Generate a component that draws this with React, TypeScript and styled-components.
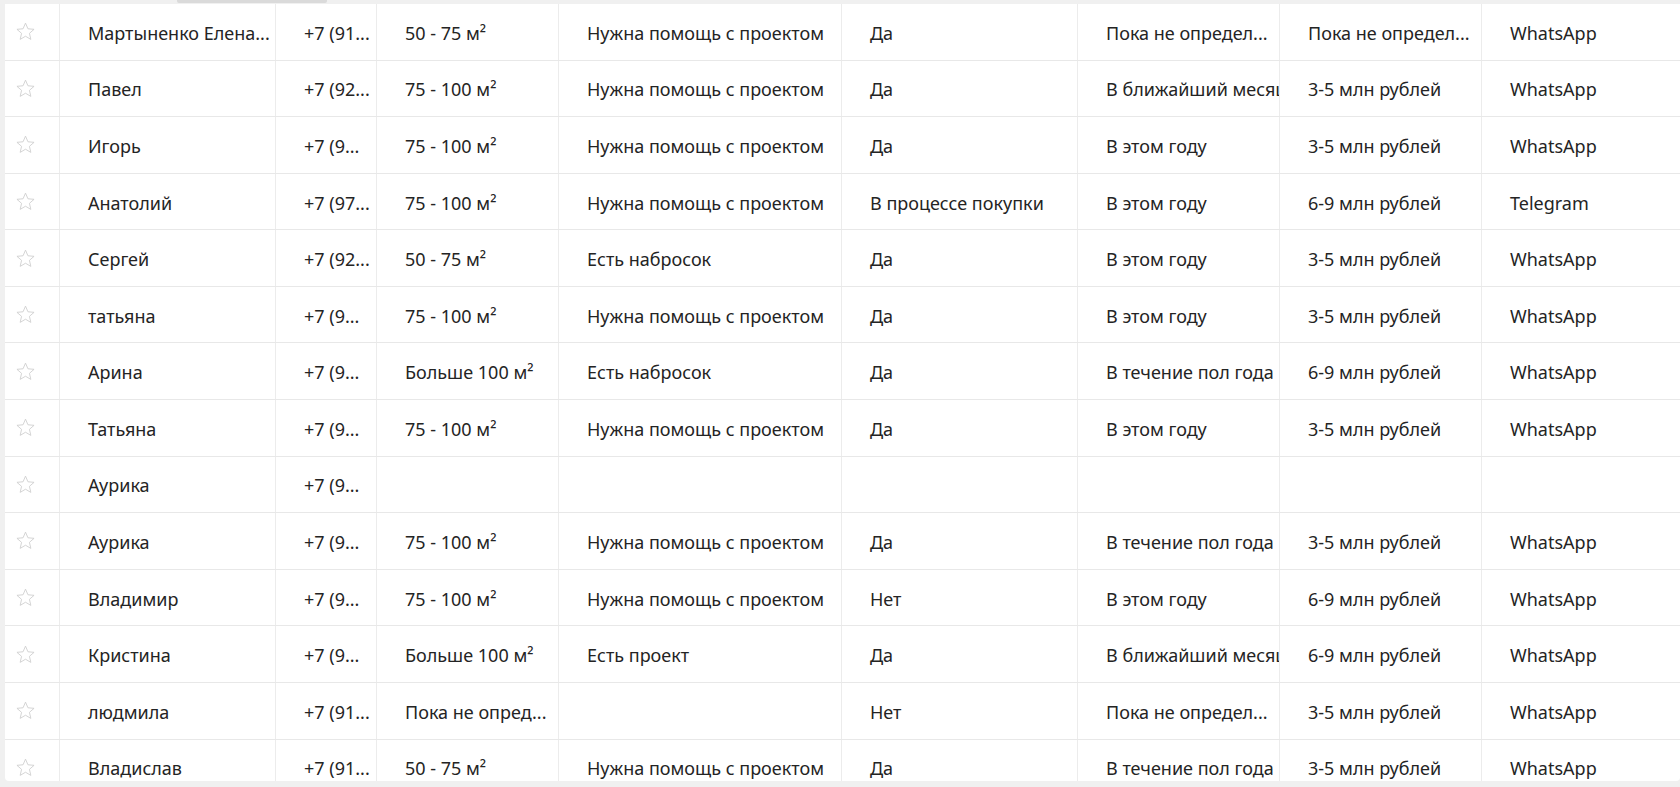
import styled, { createGlobalStyle } from 'styled-components';

const GlobalStyle = createGlobalStyle`
  html, body {
    margin: 0;
    padding: 0;
    background: rgb(240, 240, 240);
    font-family: "Noto Sans", "Open Sans", sans-serif;
    overflow: hidden;
  }
`;

const Page = styled.div`
  width: 1680px;
  height: 787px;
  display: flex;
  flex-direction: column;
`;

const ScrollTrack = styled.div`
  height: 4px;
  flex-shrink: 0;
  display: flex;
`;

const ScrollThumb = styled.div`
  margin-left: 177px;
  width: 150px;
  height: 3px;
  background: rgb(218, 218, 218);
  border-radius: 0 0 2px 2px;
`;

const TableBox = styled.div`
  margin-left: 5px;
  height: 777px;
  background: #fff;
  border-radius: 0 0 4px 4px;
  overflow: hidden;
`;

const Row = styled.div`
  display: grid;
  grid-template-columns: 55px 216px 101px 182px 283px 236px 202px 202px 1fr;
  height: 56.58px;
  box-sizing: border-box;
  border-bottom: 1px solid rgb(232, 232, 232);
`;

const Cell = styled.div`
  display: flex;
  align-items: center;
  padding-left: 28px;
  padding-top: 2px;
  border-right: 1px solid rgb(236, 236, 236);
  font-size: 18px;
  color: rgb(36, 36, 36);
  white-space: nowrap;
  overflow: hidden;
  min-width: 0;

  &:last-child {
    border-right: none;
  }
`;

const StarCell = styled(Cell)`
  padding-left: 10px;
  padding-top: 0;
`;

const Star = () => (
  <svg width="21" height="21" viewBox="0 0 24 24">
    <path
      d="M12 2.4l2.8 6.5 7 .6-5.3 4.6 1.6 6.9L12 17.4 5.9 21l1.6-6.9-5.3-4.6 7-.6z"
      fill="none"
      stroke="rgb(206, 206, 206)"
      strokeWidth="1"
      strokeLinejoin="round"
    />
  </svg>
);

const rows: string[][] = [
  ['Мартыненко Елена...', '+7 (91...', '50 - 75 м²', 'Нужна помощь с проектом', 'Да', 'Пока не определ...', 'Пока не определ...', 'WhatsApp'],
  ['Павел', '+7 (92...', '75 - 100 м²', 'Нужна помощь с проектом', 'Да', 'В ближайший месяц', '3-5 млн рублей', 'WhatsApp'],
  ['Игорь', '+7 (9...', '75 - 100 м²', 'Нужна помощь с проектом', 'Да', 'В этом году', '3-5 млн рублей', 'WhatsApp'],
  ['Анатолий', '+7 (97...', '75 - 100 м²', 'Нужна помощь с проектом', 'В процессе покупки', 'В этом году', '6-9 млн рублей', 'Telegram'],
  ['Сергей', '+7 (92...', '50 - 75 м²', 'Есть набросок', 'Да', 'В этом году', '3-5 млн рублей', 'WhatsApp'],
  ['татьяна', '+7 (9...', '75 - 100 м²', 'Нужна помощь с проектом', 'Да', 'В этом году', '3-5 млн рублей', 'WhatsApp'],
  ['Арина', '+7 (9...', 'Больше 100 м²', 'Есть набросок', 'Да', 'В течение пол года', '6-9 млн рублей', 'WhatsApp'],
  ['Татьяна', '+7 (9...', '75 - 100 м²', 'Нужна помощь с проектом', 'Да', 'В этом году', '3-5 млн рублей', 'WhatsApp'],
  ['Аурика', '+7 (9...', '', '', '', '', '', ''],
  ['Аурика', '+7 (9...', '75 - 100 м²', 'Нужна помощь с проектом', 'Да', 'В течение пол года', '3-5 млн рублей', 'WhatsApp'],
  ['Владимир', '+7 (9...', '75 - 100 м²', 'Нужна помощь с проектом', 'Нет', 'В этом году', '6-9 млн рублей', 'WhatsApp'],
  ['Кристина', '+7 (9...', 'Больше 100 м²', 'Есть проект', 'Да', 'В ближайший месяц', '6-9 млн рублей', 'WhatsApp'],
  ['людмила', '+7 (91...', 'Пока не опред...', '', 'Нет', 'Пока не определ...', '3-5 млн рублей', 'WhatsApp'],
  ['Владислав', '+7 (91...', '50 - 75 м²', 'Нужна помощь с проектом', 'Да', 'В течение пол года', '3-5 млн рублей', 'WhatsApp'],
];

const App = () => {
  return (
    <Page>
      <GlobalStyle />
      <ScrollTrack>
        <ScrollThumb />
      </ScrollTrack>
      <TableBox>
        {rows.map((row, i) => (
          <Row key={i}>
            <StarCell>
              <Star />
            </StarCell>
            {row.map((value, j) => (
              <Cell key={j}>{value}</Cell>
            ))}
          </Row>
        ))}
      </TableBox>
    </Page>
  );
};

export default App;
